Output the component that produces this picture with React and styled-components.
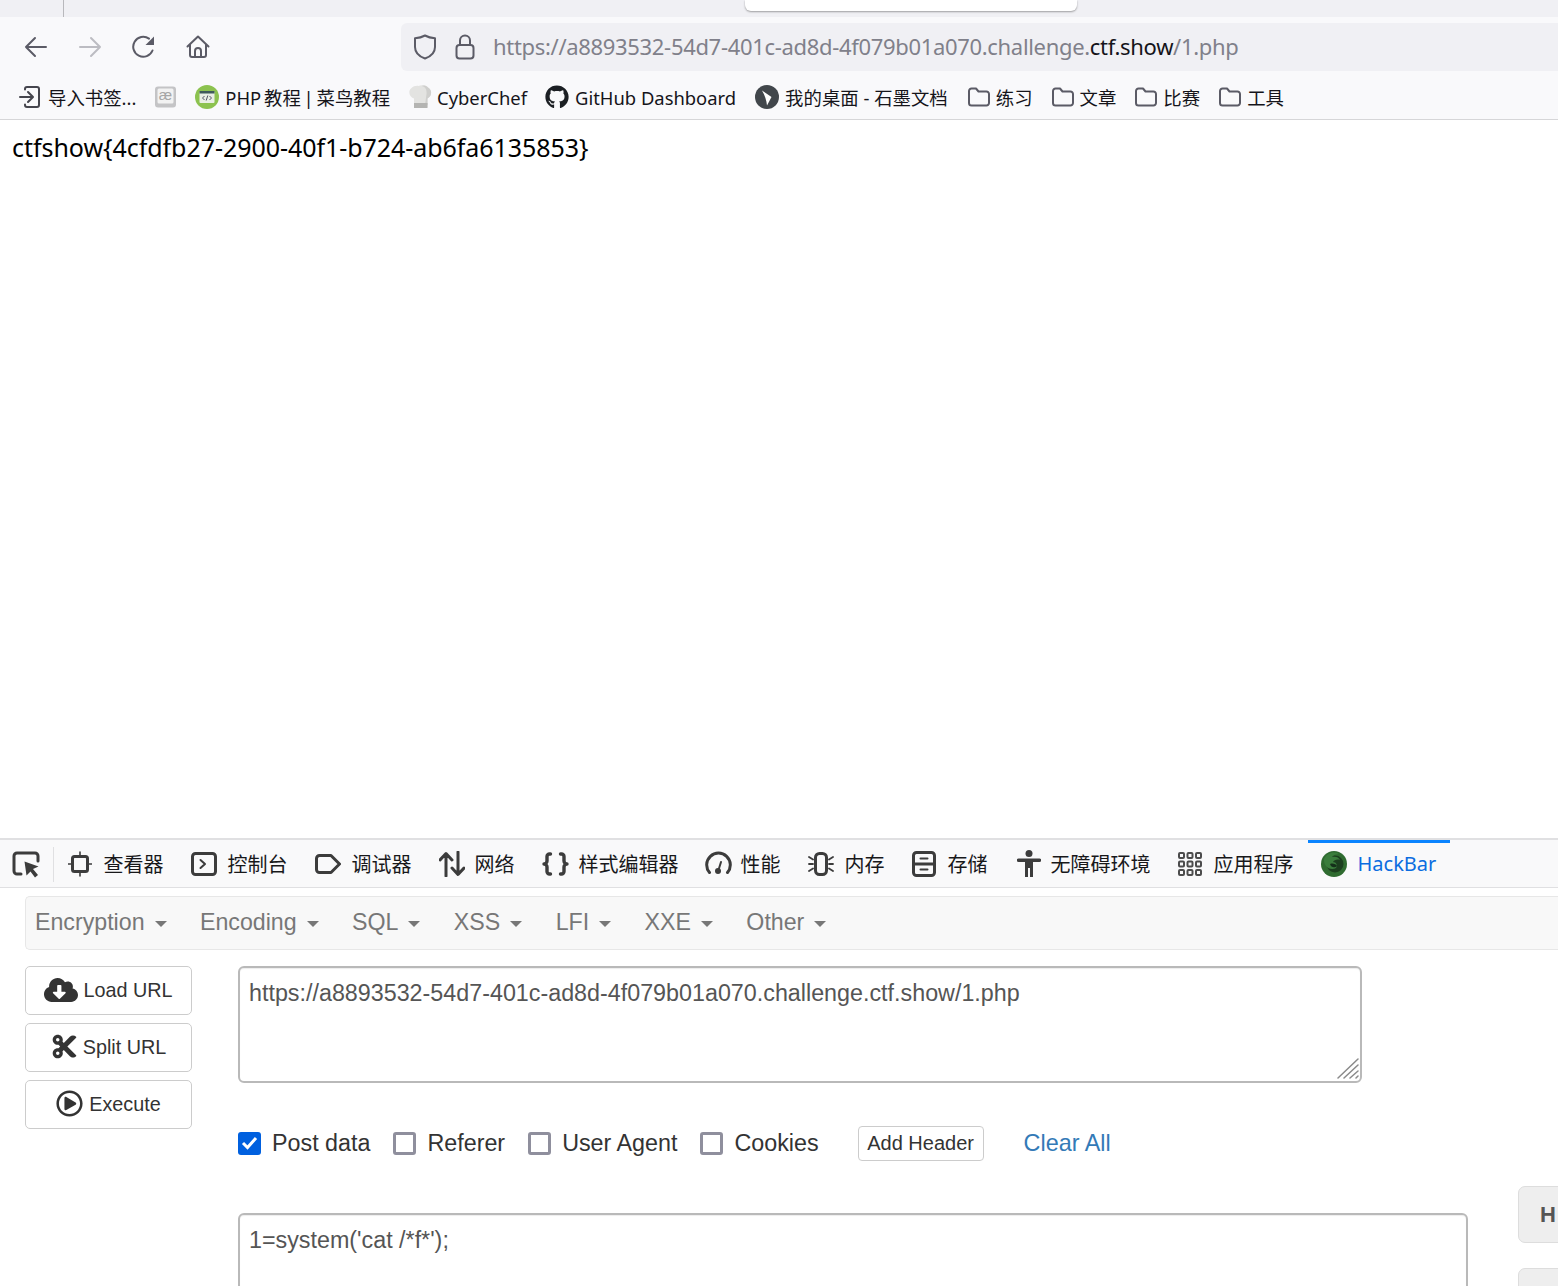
import styled, { createGlobalStyle } from "styled-components";
import { FaCloudDownloadAlt, FaCut, FaRegPlayCircle, FaGithub } from "react-icons/fa";

const Global = createGlobalStyle`
  html, body {
    margin: 0;
    padding: 0;
    overflow: hidden;
    background: #fff;
  }
`;
const uiFont = `"Noto Sans", "Noto Sans CJK SC", sans-serif`;
const barFont = `"Liberation Sans", Arial, sans-serif`;

const Page = styled.div`
  width: 1558px;
  height: 1286px;
  overflow: hidden;
  display: flex;
  flex-direction: column;
  font-family: ${uiFont};
`;
const TabStrip = styled.div`
  height: 17px;
  flex: none;
  background: #f0f0f4;
  position: relative;
`;
const TabDivider = styled.div`
  position: absolute;
  left: 63px;
  top: 0;
  width: 1px;
  height: 17px;
  background: #b8b8bc;
`;
const ActiveTab = styled.div`
  position: absolute;
  left: 745px;
  top: 0;
  width: 332px;
  height: 11px;
  background: #fff;
  border-radius: 0 0 6px 6px;
  box-shadow: 0 1px 2px rgba(0, 0, 0, 0.35);
`;
const NavBar = styled.div`
  height: 54px;
  flex: none;
  background: #f9f9fb;
  display: flex;
  align-items: flex-end;
`;
const NavButtons = styled.div`
  display: flex;
  align-items: center;
  gap: 30px;
  width: 401px;
  height: 48px;
  padding-left: 24px;
  box-sizing: border-box;
  flex: none;
`;
const UrlBar = styled.div`
  flex: 1;
  height: 48px;
  background: #f0f0f4;
  border-radius: 6px 0 0 6px;
  display: flex;
  align-items: center;
  gap: 18px;
  padding-left: 12px;
`;
const UrlText = styled.span`
  font-size: 22px;
  line-height: 46px;
  height: 48px;
  color: #80808a;
  letter-spacing: -0.32px;
  white-space: nowrap;
  b {
    font-weight: 400;
    color: #15141a;
  }
`;
const BookmarksBar = styled.div`
  height: 49px;
  flex: none;
  box-sizing: border-box;
  background: #f9f9fb;
  border-bottom: 1px solid #d6d6d8;
  display: flex;
  align-items: center;
  padding: 4px 0 0 19px;
  gap: 18px;
`;
const Bookmark = styled.div`
  display: flex;
  align-items: center;
  gap: ${(p) => p.$gap || 6}px;
  margin-right: ${(p) => p.$after || 0}px;
  font-size: 18.4px;
  word-spacing: ${(p) => p.$spacing || 0}px;
  color: #15141a;
  white-space: nowrap;
`;
const Content = styled.div`
  height: 718px;
  flex: none;
  box-sizing: border-box;
  padding: 8px 12px;
  font-size: 25px;
  letter-spacing: -0.05px;
  line-height: 38px;
  color: #000;
`;
const DevTools = styled.div`
  flex: 1;
  min-height: 0;
  border-top: 2px solid #e0e0e2;
`;
const ToolBar = styled.div`
  height: 47px;
  background: #f9f9fa;
  border-bottom: 1px solid #e0e0e2;
  display: flex;
  align-items: stretch;
  padding-left: 12px;
`;
const PickButton = styled.div`
  width: 41px;
  display: flex;
  align-items: center;
  border-right: 1px solid #e0e0e2;
  margin: 7px 0 5px;
`;
const Tab = styled.div`
  display: flex;
  align-items: center;
  gap: ${(p) => p.$gap || 11}px;
  padding: 0 13.5px 0 ${(p) => (p.$active ? 12.5 : 13.5)}px;
  font-size: 20px;
  color: ${(p) => (p.$active ? "#0a6ce0" : "#18181a")};
  white-space: nowrap;
  box-shadow: ${(p) => (p.$active ? "inset 0 3px 0 #0a84ff" : "none")};
  margin-left: ${(p) => p.$shift || 0}px;
`;
const HackBar = styled.div`
  padding: 8px 0 0 25px;
  font-family: ${barFont};
  color: #333;
`;
const MenuBar = styled.div`
  height: 54px;
  box-sizing: border-box;
  background: #f8f8f8;
  border: 1px solid #e7e7e7;
  border-right: 0;
  border-radius: 5px 0 0 5px;
  display: flex;
  align-items: center;
  gap: 33.4px;
  padding: 0 0 2px 9px;
`;
const MenuItem = styled.div`
  display: flex;
  align-items: center;
  gap: 10px;
  font-size: 23.2px;
  color: #777;
`;
const Caret = styled.span`
  width: 0;
  height: 0;
  margin-top: 4px;
  border-left: 6px solid transparent;
  border-right: 6px solid transparent;
  border-top: 6px solid #777;
`;
const Main = styled.div`
  display: flex;
  margin-top: 16px;
`;
const LeftColumn = styled.div`
  width: 167px;
  flex: none;
  display: flex;
  flex-direction: column;
  gap: 8px;
`;
const ActionButton = styled.div`
  height: 49px;
  box-sizing: border-box;
  border: 1px solid #ccc;
  border-radius: 5px;
  background: #fff;
  display: flex;
  align-items: center;
  justify-content: center;
  gap: ${(p) => p.$gap || 5}px;
  font-size: 19.8px;
  color: #333;
  svg {
    margin-top: -2px;
  }
`;
const CenterColumn = styled.div`
  width: 1230px;
  flex: none;
  margin-left: 46px;
`;
const TextBox = styled.div`
  position: relative;
  box-sizing: border-box;
  width: ${(p) => p.$width}px;
  height: ${(p) => p.$height}px;
  border: 2px solid #b9b9b9;
  border-radius: 6px;
  padding: 11px 9px;
  font-size: 23.3px;
  line-height: 28px;
  color: #555;
  box-shadow: inset 0 1px 1px rgba(0, 0, 0, 0.075);
`;
const ResizeGrip = styled.svg`
  position: absolute;
  right: 1px;
  bottom: 1px;
`;
const Options = styled.div`
  display: flex;
  align-items: center;
  height: 36px;
  margin: 42px 0 52px;
`;
const Check = styled.span`
  width: 23px;
  height: 23px;
  box-sizing: border-box;
  border-radius: 3px;
  border: ${(p) => (p.$on ? "0" : "3px solid #8f8f9d")};
  background: ${(p) => (p.$on ? "#0060df" : "#fff")};
  display: flex;
  align-items: center;
  justify-content: center;
  flex: none;
`;
const OptionLabel = styled.label`
  display: flex;
  align-items: center;
  gap: 11px;
  font-size: 23.3px;
  color: #333;
  margin-right: 23px;
  white-space: nowrap;
`;
const AddHeader = styled.div`
  height: 35px;
  box-sizing: border-box;
  width: 126px;
  margin-left: 16px;
  border: 1px solid #ccc;
  border-radius: 4px;
  display: flex;
  align-items: center;
  justify-content: center;
  font-size: 20px;
  color: #333;
`;
const ClearAll = styled.a`
  margin-left: 40px;
  font-size: 23.4px;
  color: #337ab7;
`;
const SideColumn = styled.div`
  margin-left: 50px;
  padding-top: 220px;
  display: flex;
  flex-direction: column;
  gap: 25px;
  flex: none;
`;
const SideButton = styled.div`
  width: 120px;
  height: 57px;
  box-sizing: border-box;
  background: #eee;
  border: 1px solid #ddd;
  border-radius: 7px;
  padding-left: 21px;
  display: flex;
  align-items: center;
  font-size: 22px;
  font-weight: 700;
  color: #555;
`;

const navStroke = { fill: "none", stroke: "#5b5b66", strokeWidth: 2, strokeLinecap: "round", strokeLinejoin: "round" };
const toolStroke = { fill: "none", stroke: "#3c3c3c", strokeWidth: 2.4, strokeLinecap: "round", strokeLinejoin: "round" };

const Back = ({ color = "#5b5b66" }) => (
  <svg width="24" height="24" viewBox="0 0 24 24" {...navStroke} stroke={color}>
    <path d="M2 12h20M2 12l9-9M2 12l9 9" />
  </svg>
);
const Forward = () => (
  <svg width="24" height="24" viewBox="0 0 24 24" {...navStroke} stroke="#bcbcc2">
    <path d="M22 12H2M22 12l-9-9M22 12l-9 9" />
  </svg>
);
const Reload = () => (
  <svg width="24" height="24" viewBox="0 0 24 24" {...navStroke}>
    <path d="M20.5 15.5A10 10 0 1 1 17 3.6" />
    <path d="M22 1.5V10h-8.5z" fill="#5b5b66" stroke="none" />
  </svg>
);
const Home = () => (
  <svg width="24" height="24" viewBox="0 0 24 24" {...navStroke}>
    <path d="M1.5 11.5L12 1.5l10.5 10M4 9.5V20a2 2 0 0 0 2 2h12a2 2 0 0 0 2-2V9.5" />
    <path d="M9 22v-6a3 3 0 0 1 6 0v6" />
  </svg>
);
const Shield = () => (
  <svg width="24" height="26" viewBox="0 0 24 26" {...navStroke}>
    <path d="M12 1.5c3 1.6 6 2.4 10 2.8v8.7c0 5.500-4.500 9.600-10 11.500C6.500 22.600 2 18.500 2 13V4.300c4-.4 7-1.200 10-2.800z" />
  </svg>
);
const Lock = () => (
  <svg width="20" height="26" viewBox="0 0 20 26" {...navStroke}>
    <rect x="1.500" y="11" width="17" height="13.500" rx="3" />
    <path d="M5 11V6.500a5 5 0 0 1 10 0V11" />
  </svg>
);
const ImportIcon = () => (
  <svg width="22" height="22" viewBox="0 0 22 22" fill="none" stroke="#45454d" strokeWidth="2" strokeLinecap="round" strokeLinejoin="round">
    <path d="M1 11h12M9 6l5 5-5 5" />
    <path d="M6 3.500V3a2 2 0 0 1 2-2h10a2 2 0 0 1 2 2v16a2 2 0 0 1-2 2H8a2 2 0 0 1-2-2v-.5" />
  </svg>
);
const AeIcon = () => (
  <svg width="21" height="22" viewBox="0 0 21 22">
    <rect width="21" height="21" y="0.500" rx="3" fill="#c4c4c6" />
    <rect x="2.500" y="2.500" width="16" height="15" rx="1.500" fill="#f2f2f2" />
    <text x="10.500" y="14" fontSize="15" textAnchor="middle" fill="#a6a6a6" fontFamily="Liberation Sans">æ</text>
  </svg>
);
const RunoobIcon = () => (
  <svg width="24" height="24" viewBox="0 0 24 24">
    <circle cx="12" cy="12" r="12" fill="#8cc24f" />
    <rect x="4.500" y="6" width="15" height="12" rx="1" fill="#e9efe4" />
    <rect x="4.500" y="6" width="15" height="2.500" fill="#3f5a5a" />
    <path d="M9.500 11l-2 2 2 2M14.500 11l2 2-2 2M12.800 10.500l-1.600 5" fill="none" stroke="#556" strokeWidth="1" />
  </svg>
);
const ChefIcon = () => (
  <svg width="24" height="24" viewBox="0 0 24 24">
    <path d="M6 22V13.500C1 12 0 6 3 3.500 5 1 9 .500 10.500 1 13-.5 18 0 20 2.500c4 2 4.500 8-.5 11V22z" fill="#e3e3e1" />
    <path d="M14 1c3 .5 5 3 4.500 8L17 20h2.500v-6.500c5-3 4.500-9 .5-11-2-2-4-2.500-6-1.500z" fill="#cfcfcd" />
    <rect x="6" y="18" width="13.500" height="5" fill="#b4b4b2" />
  </svg>
);
const ShimoIcon = () => (
  <svg width="24" height="24" viewBox="0 0 24 24">
    <circle cx="12" cy="12" r="12" fill="#41464b" />
    <path d="M7 5.500l9.500 6.500-4.500 8.500c-.5-5-2-10-5-15z" fill="#fff" />
  </svg>
);
const FolderIcon = () => (
  <svg width="22" height="20" viewBox="0 0 22 20" fill="none" stroke="#5b5b66" strokeWidth="2" strokeLinejoin="round">
    <path d="M1 4a2.500 2.500 0 0 1 2.500-2.500H8l2.500 3H18.500A2.500 2.500 0 0 1 21 7v9a2.500 2.500 0 0 1-2.500 2.500h-15A2.500 2.500 0 0 1 1 16z" />
  </svg>
);

const PickIcon = () => (
  <svg width="28" height="28" viewBox="0 0 28 28" fill="none" stroke="#3c3c3c" strokeWidth="3" strokeLinejoin="round" strokeLinecap="round">
    <path d="M9 23H5a3 3 0 0 1-3-3V5a3 3 0 0 1 3-3h18a3 3 0 0 1 3 3v5" />
    <path d="M12.500 10.500l14 5-5.500 2.500 5 6-3 2.500-4.500-6-4 4z" fill="#3c3c3c" stroke="none" />
  </svg>
);
const InspectorIcon = () => (
  <svg width="24" height="26" viewBox="0 0 24 26" {...toolStroke} strokeWidth="3">
    <rect x="4.500" y="5.500" width="15" height="15" rx="2" />
    <path d="M12 1v3M12 22v3M0.500 13h3M20.500 13h3" strokeWidth="1.600" />
  </svg>
);
const ConsoleIcon = () => (
  <svg width="26" height="24" viewBox="0 0 26 24" {...toolStroke} strokeWidth="3">
    <rect x="1.500" y="1.500" width="23" height="21" rx="3" />
    <path d="M9.500 8l4.500 4-4.500 4" strokeWidth="2" />
  </svg>
);
const DebuggerIcon = () => (
  <svg width="26" height="20" viewBox="0 0 26 20" {...toolStroke} strokeWidth="3">
    <path d="M1.500 4.500a3 3 0 0 1 3-3H16l8.500 8.500-8.500 8.500H4.500a3 3 0 0 1-3-3z" />
  </svg>
);
const NetworkIcon = () => (
  <svg width="26" height="26" viewBox="0 0 26 26" {...toolStroke} strokeWidth="3">
    <path d="M7 25V3M1 9l6-6.500L13 9M19 1v22M13 17l6 6.500L25 17" />
  </svg>
);
const StyleIcon = () => (
  <svg width="27" height="24" viewBox="0 0 27 24" {...toolStroke} strokeWidth="3.400">
    <path d="M8.500 2H7.500A2.500 2.500 0 0 0 5 4.500V9a3 3 0 0 1-3 3 3 3 0 0 1 3 3v4.500A2.500 2.500 0 0 0 7.500 22h1" />
    <path d="M18.500 2h1A2.500 2.500 0 0 1 22 4.500V9a3 3 0 0 0 3 3 3 3 0 0 0-3 3v4.500a2.500 2.500 0 0 1-2.500 2.500h-1" />
  </svg>
);
const PerfIcon = () => (
  <svg width="27" height="26" viewBox="0 0 27 26" {...toolStroke} strokeWidth="3">
    <path d="M4.500 21.500A11.800 11.800 0 1 1 22.500 21.500" />
    <path d="M13.500 19l2.500-8" strokeWidth="2" />
    <circle cx="13" cy="20" r="3" fill="#3c3c3c" stroke="none" />
  </svg>
);
const MemoryIcon = () => (
  <svg width="26" height="26" viewBox="0 0 26 26" {...toolStroke} strokeWidth="3">
    <rect x="7.500" y="2.500" width="11" height="21" rx="4" />
    <path d="M1 6l4 2.500M1 13h4M1 20l4-2.500M25 6l-4 2.500M25 13h-4M25 20l-4-2.500" strokeWidth="1.800" />
  </svg>
);
const StorageIcon = () => (
  <svg width="24" height="26" viewBox="0 0 24 26" {...toolStroke} strokeWidth="3">
    <rect x="1.500" y="1.500" width="21" height="23" rx="3" />
    <path d="M1.500 13h21" />
    <path d="M8.500 7.500h7M8.500 18.500h7" strokeWidth="2" />
  </svg>
);
const AccessIcon = () => (
  <svg width="24" height="28" viewBox="0 0 24 28" fill="#3c3c3c">
    <circle cx="12" cy="3.500" r="3.500" />
    <path d="M1.500 8.500h21a1.500 1.500 0 0 1 0 3.500H16v15h-3v-9h-2v9H8V12H1.500a1.500 1.500 0 0 1 0-3.500z" />
  </svg>
);
const AppIcon = () => (
  <svg width="24" height="24" viewBox="0 0 24 24" fill="none" stroke="#4c4c4c" strokeWidth="2">
    {[1, 9.5, 18].flatMap((y) =>
      [1, 9.5, 18].map((x) => <rect key={x + "-" + y} x={x} y={y} width="5" height="5" rx="1" />)
    )}
  </svg>
);
const HackBarIcon = () => (
  <svg width="26" height="26" viewBox="0 0 26 26">
    <circle cx="13" cy="13" r="13" fill="#2f6b30" />
    <circle cx="14" cy="13" r="8.500" fill="#1c3f1f" />
    <path d="M3 8c3-6 10-8 15-5-3 0-6 1-7 3 3-1 7 0 8 3-3-1-6 0-7 2 3 0 5 3 3 6-3 2-8 1-10-2C3 13 3 10 3 8z" fill="#3a7d3c" />
    <path d="M9 13c3-1 6 0 7 2-2 2-6 2-7-2z" fill="#14301a" />
  </svg>
);

const bookmarks = [
  { icon: <ImportIcon />, text: "导入书签...", gap: 7, after: 1 },
  { icon: <AeIcon />, text: "", after: 1 },
  { icon: <RunoobIcon />, text: "PHP 教程 | 菜鸟教程", spacing: -2 },
  { icon: <ChefIcon />, text: "CyberChef", gap: 5 },
  { icon: <FaGithub size={24} color="#1b1f23" />, text: "GitHub Dashboard", after: 1 },
  { icon: <ShimoIcon />, text: "我的桌面 - 石墨文档", after: 2 },
  { icon: <FolderIcon />, text: "练习", after: 1 },
  { icon: <FolderIcon />, text: "文章", after: 1 },
  { icon: <FolderIcon />, text: "比赛", after: 1 },
  { icon: <FolderIcon />, text: "工具" },
];
const tools = [
  { icon: <InspectorIcon />, text: "查看器", gap: 12 },
  { icon: <ConsoleIcon />, text: "控制台", gap: 11 },
  { icon: <DebuggerIcon />, text: "调试器", gap: 11 },
  { icon: <NetworkIcon />, text: "网络", gap: 10 },
  { icon: <StyleIcon />, text: "样式编辑器", gap: 10 },
  { icon: <PerfIcon />, text: "性能", gap: 9, shift: -1 },
  { icon: <MemoryIcon />, text: "内存", gap: 11 },
  { icon: <StorageIcon />, text: "存储", gap: 12 },
  { icon: <AccessIcon />, text: "无障碍环境", gap: 10, shift: 2 },
  { icon: <AppIcon />, text: "应用程序", gap: 12 },
];
const menus = ["Encryption", "Encoding", "SQL", "XSS", "LFI", "XXE", "Other"];
const options = [
  { label: "Post data", on: true },
  { label: "Referer" },
  { label: "User Agent" },
  { label: "Cookies" },
];

export default function App() {
  return (
    <Page>
      <Global />
      <TabStrip>
        <TabDivider />
        <ActiveTab />
      </TabStrip>
      <NavBar>
        <NavButtons>
          <Back />
          <Forward />
          <Reload />
          <Home />
        </NavButtons>
        <UrlBar>
          <Shield />
          <Lock />
          <UrlText>
            https://a8893532-54d7-401c-ad8d-4f079b01a070.challenge.<b>ctf.show</b>/1.php
          </UrlText>
        </UrlBar>
      </NavBar>
      <BookmarksBar>
        {bookmarks.map((b, i) => (
          <Bookmark key={i} $gap={b.gap} $after={b.after} $spacing={b.spacing}>
            {b.icon}
            {b.text && <span>{b.text}</span>}
          </Bookmark>
        ))}
      </BookmarksBar>
      <Content>ctfshow{"{"}4cfdfb27-2900-40f1-b724-ab6fa6135853{"}"}</Content>
      <DevTools>
        <ToolBar>
          <PickButton>
            <PickIcon />
          </PickButton>
          {tools.map((t) => (
            <Tab key={t.text} $gap={t.gap} $shift={t.shift}>
              {t.icon}
              <span>{t.text}</span>
            </Tab>
          ))}
          <Tab $active $gap={11} $shift={1}>
            <HackBarIcon />
            <span>HackBar</span>
          </Tab>
        </ToolBar>
        <HackBar>
          <MenuBar>
            {menus.map((m) => (
              <MenuItem key={m}>
                {m}
                <Caret />
              </MenuItem>
            ))}
          </MenuBar>
          <Main>
            <LeftColumn>
              <ActionButton>
                <FaCloudDownloadAlt size={34} color="#333" />
                Load URL
              </ActionButton>
              <ActionButton>
                <FaCut size={27} color="#333" />
                Split URL
              </ActionButton>
              <ActionButton $gap={6}>
                <FaRegPlayCircle size={27} color="#333" />
                Execute
              </ActionButton>
            </LeftColumn>
            <CenterColumn>
              <TextBox $width={1124} $height={117}>
                https://a8893532-54d7-401c-ad8d-4f079b01a070.challenge.ctf.show/1.php
                <ResizeGrip width="22" height="22" viewBox="0 0 22 22" stroke="#8a8a8a" strokeWidth="1.500" strokeLinecap="round">
                  <path d="M1 20L21 1M7 20L21 7M13 20l8-7M19 20l2-2" />
                </ResizeGrip>
              </TextBox>
              <Options>
                {options.map((o) => (
                  <OptionLabel key={o.label}>
                    <Check $on={o.on}>
                      {o.on && (
                        <svg width="17" height="14" viewBox="0 0 17 14" fill="none" stroke="#fff" strokeWidth="3">
                          <path d="M2 7l4.500 4.500L15 2" />
                        </svg>
                      )}
                    </Check>
                    {o.label}
                  </OptionLabel>
                ))}
                <AddHeader>Add Header</AddHeader>
                <ClearAll>Clear All</ClearAll>
              </Options>
              <TextBox $width={1230} $height={200}>
                1=system('cat /*f*');
              </TextBox>
            </CenterColumn>
            <SideColumn>
              <SideButton>H</SideButton>
              <SideButton />
            </SideColumn>
          </Main>
        </HackBar>
      </DevTools>
    </Page>
  );
}
